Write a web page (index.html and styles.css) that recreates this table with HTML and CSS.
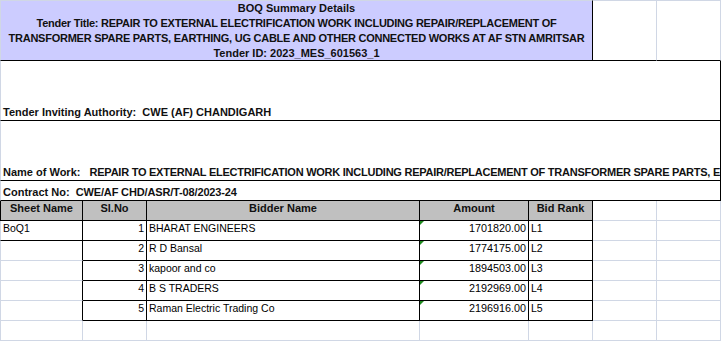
FILE: index.html
```html
<!DOCTYPE html>
<html>
<head>
<meta charset="utf-8">
<link rel="stylesheet" href="styles.css">
<title>BOQ Summary</title>
</head>
<body>
<div class="sheet">
  <div class="c title top first span5">
    <div>BOQ Summary Details</div>
    <div class="caps">Tender Title: REPAIR TO EXTERNAL ELECTRIFICATION WORK INCLUDING REPAIR/REPLACEMENT OF</div>
    <div class="caps">TRANSFORMER SPARE PARTS, EARTHING, UG CABLE AND OTHER CONNECTED WORKS AT AF STN AMRITSAR</div>
    <div>Tender ID: 2023_MES_601563_1</div>
  </div>
  <div class="c top bb"></div>
  <div class="c top bb"></div>

  <div class="c first span7 info tall">Tender Inviting Authority:  CWE (AF) CHANDIGARH</div>
  <div class="c first span7 info tall">Name of Work:   <span class="caps">REPAIR TO EXTERNAL ELECTRIFICATION WORK INCLUDING REPAIR/REPLACEMENT OF TRANSFORMER SPARE PARTS, EARTHING, UG CABLE AND OTHER CONNECTED WORKS AT AF STN AMRITSAR</span></div>
  <div class="c first span7 info">Contract No:  <span class="caps-s">CWE/AF CHD/ASR/T-08/2023-24</span></div>

  <div class="c first hd bl">Sheet Name</div>
  <div class="c hd">Sl.No</div>
  <div class="c hd">Bidder Name</div>
  <div class="c hd">Amount</div>
  <div class="c hd">Bid Rank</div>
  <div class="c"></div>
  <div class="c"></div>

  <div class="c first d sheetname br bb">BoQ1</div>
  <div class="c d num tb">1</div>
  <div class="c d tb">BHARAT ENGINEERS</div>
  <div class="c d num tb amt">1701820.00</div>
  <div class="c d tb">L1</div>
  <div class="c"></div>
  <div class="c"></div>

  <div class="c first d br"></div>
  <div class="c d num tb">2</div>
  <div class="c d tb">R D Bansal</div>
  <div class="c d num tb amt">1774175.00</div>
  <div class="c d tb">L2</div>
  <div class="c"></div>
  <div class="c"></div>

  <div class="c first d br"></div>
  <div class="c d num tb">3</div>
  <div class="c d tb">kapoor and co</div>
  <div class="c d num tb amt">1894503.00</div>
  <div class="c d tb">L3</div>
  <div class="c"></div>
  <div class="c"></div>

  <div class="c first d br"></div>
  <div class="c d num tb">4</div>
  <div class="c d tb">B S TRADERS</div>
  <div class="c d num tb amt">2192969.00</div>
  <div class="c d tb">L4</div>
  <div class="c"></div>
  <div class="c"></div>

  <div class="c first d br"></div>
  <div class="c d num tb">5</div>
  <div class="c d tb">Raman Electric Trading Co</div>
  <div class="c d num tb amt">2196916.00</div>
  <div class="c d tb">L5</div>
  <div class="c"></div>
  <div class="c"></div>

  <div class="c first"></div>
  <div class="c"></div>
  <div class="c"></div>
  <div class="c"></div>
  <div class="c"></div>
  <div class="c"></div>
  <div class="c"></div>
</div>
</body>
</html>
```
FILE: styles.css
```css
html, body {
  margin: 0;
  padding: 0;
  background: #ffffff;
}

body {
  font-family: "Liberation Sans", Arial, sans-serif;
  color: #000000;
  width: 721px;
  height: 341px;
  overflow: hidden;
}

.sheet {
  display: grid;
  grid-template-columns: 83px 64px 273px 109px 64px 64px 64px;
  grid-template-rows: 61px 60px 60px 20px 20px repeat(6, 20px);
  width: 721px;
}

.c {
  box-sizing: border-box;
  border-right: 1px solid #d0d7e5;
  border-bottom: 1px solid #d0d7e5;
  min-width: 0;
  overflow: hidden;
  position: relative;
}

.c.first {
  border-left: 1px solid #d0d7e5;
}

.c.top {
  border-top: 1px solid #d0d7e5;
}

.span5 {
  grid-column: 1 / 6;
}

.span7 {
  grid-column: 1 / 8;
}

.title {
  background: #ccccff;
  border-right-color: #000;
  border-bottom-color: #000;
  font-weight: bold;
  font-size: 11px;
  line-height: 15px;
  text-align: center;
  white-space: nowrap;
  color: #111;
}

.caps {
  letter-spacing: -0.25px;
}

.caps-s {
  letter-spacing: -0.15px;
}

.bb {
  border-bottom-color: #000;
}

.br {
  border-right-color: #000;
}

.info {
  border-right-color: #000;
  border-bottom-color: #000;
  font-weight: bold;
  font-size: 11px;
  line-height: 15px;
  white-space: pre;
  display: flex;
  align-items: flex-end;
  padding-left: 2px;
  color: #111;
}

.hd {
  background: #c0c0c0;
  border-right-color: #000;
  border-bottom-color: #000;
  font-weight: bold;
  font-size: 11px;
  line-height: 15px;
  text-align: center;
  white-space: nowrap;
  color: #111;
}

.hd.bl {
  border-left-color: #000;
}

.d {
  font-size: 10.5px;
  line-height: 15px;
  white-space: nowrap;
  padding-left: 2px;
}

.sheetname {
  padding-left: 2px;
}

.tb {
  border-right-color: #000;
  border-bottom-color: #000;
}

.num {
  text-align: right;
  padding-left: 0;
  padding-right: 2px;
}

.num.amt {
  font-size: 10.8px;
}

.amt::before {
  content: "";
  position: absolute;
  left: 0;
  top: 0;
  width: 0;
  height: 0;
  border-top: 4px solid #1d8a1d;
  border-right: 4px solid transparent;
}
```
